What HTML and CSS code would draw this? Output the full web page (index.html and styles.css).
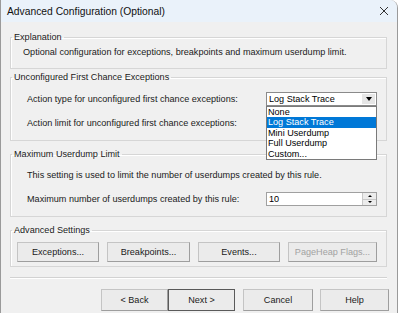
FILE: index.html
```html
<!DOCTYPE html>
<html lang="en">
<head>
  <meta charset="UTF-8" />
  <title>Advanced Configuration (Optional)</title>
  <link rel="stylesheet" href="styles.css">
</head>
<body>
  <div class="window">
    <div class="titlebar">
      <span class="title">Advanced Configuration (Optional)</span>
      <svg class="close" width="10" height="10" viewBox="0 0 10 10">
        <path d="M1 1L9 9M9 1L1 9" stroke="#333" stroke-width="1" fill="none"/>
      </svg>
    </div>

    <div class="dialog-body">
      <fieldset class="group group-explain">
        <legend>Explanation</legend>
        <p class="note">Optional configuration for exceptions, breakpoints and maximum userdump limit.</p>
      </fieldset>

      <fieldset class="group group-rows group-first">
        <legend>Unconfigured First Chance Exceptions</legend>
        <div class="row">
          <span>Action type for unconfigured first chance exceptions:</span>
          <div class="combo">
            <span class="combo-value">Log Stack Trace</span>
            <span class="combo-arrow"></span>
            <ul class="droplist">
              <li>None</li>
              <li class="selected">Log Stack Trace</li>
              <li>Mini Userdump</li>
              <li>Full Userdump</li>
              <li>Custom...</li>
            </ul>
          </div>
        </div>
        <div class="row">
          <span>Action limit for unconfigured first chance exceptions:</span>
        </div>
      </fieldset>

      <fieldset class="group group-rows group-max">
        <legend>Maximum Userdump Limit</legend>
        <div class="row">
          <span>This setting is used to limit the number of userdumps created by this rule.</span>
        </div>
        <div class="row">
          <span>Maximum number of userdumps created by this rule:</span>
          <div class="spin">
            <span class="spin-value">10</span>
            <span class="spin-buttons">
              <span class="spin-btn"><i class="up"></i></span>
              <span class="spin-btn"><i class="down"></i></span>
            </span>
          </div>
        </div>
      </fieldset>

      <fieldset class="group group-buttons">
        <legend>Advanced Settings</legend>
        <div class="button-row">
          <button class="btn w-exc">Exceptions...</button>
          <button class="btn w-brk">Breakpoints...</button>
          <button class="btn w-evt">Events...</button>
          <button class="btn w-heap" disabled>PageHeap Flags...</button>
        </div>
      </fieldset>

      <div class="separator"></div>

      <div class="footer">
        <button class="btn w-nav">&lt; Back</button>
        <button class="btn w-nav btn-default">Next &gt;</button>
        <button class="btn w-cancel">Cancel</button>
        <button class="btn w-help">Help</button>
      </div>
    </div>
  </div>
</body>
</html>
```

FILE: styles.css
```css
body {
  margin: 0;
  background: #fff;
  font-family: "Liberation Sans", Arial, sans-serif;
  font-size: 9.1px;
  color: #1a1a1a;
}

.window {
  width: 396px;
  height: 313px;
  background: #f0f0f0;
  border-left: 1px solid #9a9a9a;
  border-right: 1px solid #9a9a9a;
  border-top-right-radius: 8px;
  overflow: hidden;
}

.titlebar {
  height: 22px;
  background: #eaf2fa;
  display: flex;
  align-items: center;
  justify-content: space-between;
  padding: 0 8px 0 6px;
}

.title {
  font-size: 10.3px;
  color: #111;
}

.dialog-body {
  padding: 9px 10px 0 9px;
}

.group {
  margin: 0;
  padding: 0;
  border: 1px solid #d6d6d6;
  box-shadow: inset 1px 1px 0 #fff;
  min-width: 0;
}

legend {
  padding: 0 2px;
  margin-left: 1px;
  line-height: 12px;
  color: #1a1a1a;
}

.note {
  margin: 0;
  padding: 3px 0 10px 12px;
  line-height: 12px;
}

.group-rows {
  display: flex;
  flex-direction: column;
  gap: 10px;
  padding: 9px 9px 10px 16px;
}

.group-rows legend {
  margin-left: -15px;
}

.group-first {
  margin-top: 2px;
}

.group-max {
  margin-top: 7px;
  padding-top: 8px;
}

.row {
  height: 14px;
  display: flex;
  align-items: center;
  justify-content: space-between;
}

.combo, .spin {
  position: relative;
  width: 109px;
  height: 12px;
  background: #fff;
  border: 1px solid #8a8a8a;
  display: flex;
  align-items: center;
  justify-content: space-between;
}

.combo-value, .spin-value {
  padding-left: 2px;
  color: #000;
}

.combo-arrow {
  width: 13px;
  height: 10px;
  margin-right: 1px;
  background: #e6e6e6;
  position: relative;
}

.combo-arrow::after {
  content: "";
  position: absolute;
  left: 4px;
  top: 3px;
  border-left: 3px solid transparent;
  border-right: 3px solid transparent;
  border-top: 4px solid #000;
}

.droplist {
  position: absolute;
  left: -1px;
  top: 13px;
  width: 109px;
  margin: 0;
  padding: 0;
  list-style: none;
  background: #fff;
  border: 1px solid #7a7a7a;
  z-index: 2;
}

.droplist li {
  height: 10.4px;
  line-height: 10.4px;
  padding-left: 1px;
  color: #000;
}

.droplist li.selected {
  background: #0078d7;
  color: #fff;
}

.spin {
  border-color: #a0a0a0;
}

.spin-buttons {
  display: flex;
  flex-direction: column;
  width: 13px;
  height: 12px;
  border-left: 1px solid #c8c8c8;
}

.spin-btn {
  flex: 1;
  background: #ececec;
  border-bottom: 1px solid #c8c8c8;
  display: flex;
  align-items: center;
  justify-content: center;
}

.spin-btn:last-child {
  border-bottom: none;
}

.spin-btn i.up {
  border-left: 2px solid transparent;
  border-right: 2px solid transparent;
  border-bottom: 2px solid #000;
}

.spin-btn i.down {
  border-left: 2px solid transparent;
  border-right: 2px solid transparent;
  border-top: 2px solid #000;
}

.group-buttons {
  margin-top: 7px;
  padding: 6px 6px 4px;
}

.group-buttons legend {
  margin-left: -5px;
}

.button-row {
  display: flex;
  gap: 8px;
}

.btn {
  height: 20px;
  padding: 0;
  font-family: inherit;
  font-size: 9.1px;
  color: #1a1a1a;
  background: #ebebeb;
  border: 1px solid #c4c4c4;
  border-right-color: #9e9e9e;
  border-bottom-color: #9e9e9e;
}

.btn:disabled {
  color: #a2a2a2;
}

.w-exc { width: 82px; }
.w-brk { width: 83px; }
.w-evt { width: 82px; }
.w-heap { width: 89px; }

.separator {
  margin-top: 10px;
  height: 1px;
  background: #d2d2d2;
  border-bottom: 1px solid #fff;
}

.footer {
  margin-top: 10px;
  display: flex;
  justify-content: flex-end;
  margin-right: -2px;
}

.footer .btn {
  height: 22px;
}

.w-nav { width: 67px; }
.w-cancel { width: 70px; margin-left: 8px; }
.w-help { width: 69px; margin-left: 7px; }

.btn-default {
  border-color: #5a5a5a;
}
```
